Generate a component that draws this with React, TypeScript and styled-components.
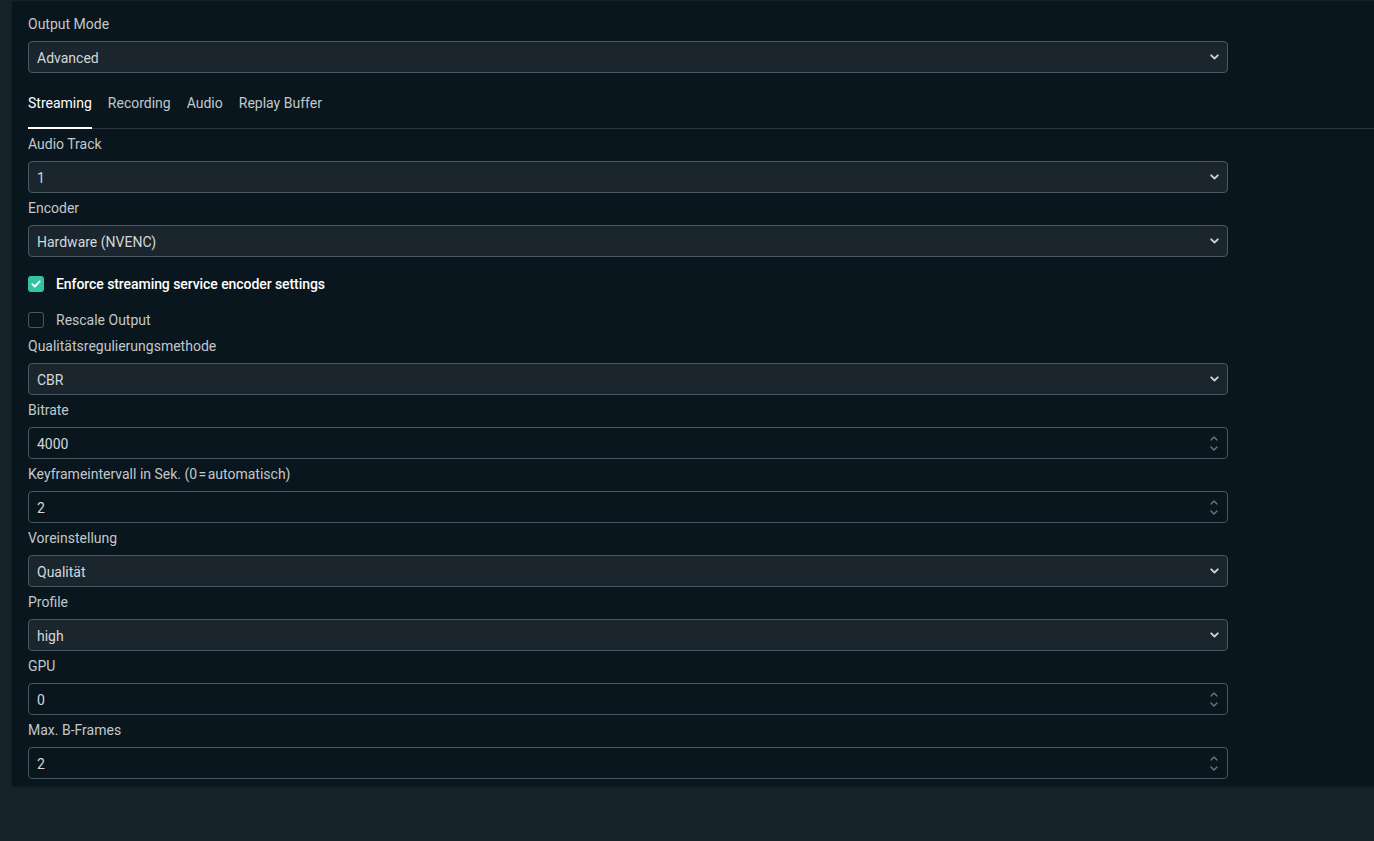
import React from "react";
import styled, { createGlobalStyle } from "styled-components";

const GlobalStyle = createGlobalStyle`
  html, body { margin: 0; padding: 0; background: #17232b; }
  body { font-family: Roboto, "Noto Sans", "Liberation Sans", sans-serif; font-size: 14px; }
  * { box-sizing: border-box; }
`;

const Page = styled.div`
  min-height: 841px;
  padding: 1px 0 0 12px;
  background: #17232b;
`;

const Panel = styled.div`
  background: #09161d;
  padding: 8px 0 7px 16px;
  box-shadow: 0 1px 3px rgba(0, 0, 0, 0.35);
`;

const Field = styled.div`
  width: 1200px;
`;

const Label = styled.div`
  height: 32px;
  line-height: 31px;
  color: #c2c8cc;
  font-size: 14px;
`;

const Box = styled.div<{ $raised?: boolean }>`
  height: 32px;
  display: flex;
  align-items: center;
  border: 1px solid #4a5761;
  border-radius: 4px;
  background: ${(p) => (p.$raised ? "#1a252d" : "#09161d")};
  padding: 0 8px 0 8px;
`;

const Value = styled.span`
  flex: 1;
  color: #d4d8db;
  font-size: 14px;
  padding-top: 1px;
`;

const Chevron = styled.svg`
  width: 9px;
  height: 6px;
`;

const Spinner = styled.div`
  display: flex;
  flex-direction: column;
  gap: 5px;
  margin-right: 1px;
`;

const SpinArrow = styled.svg`
  width: 8px;
  height: 5px;
  display: block;
`;

const TabBar = styled.div`
  display: flex;
  gap: 16px;
  margin-top: 8px;
  border-bottom: 1px solid #2b363e;
`;

const Tab = styled.div<{ $active?: boolean }>`
  position: relative;
  padding: 12px 0 15px;
  line-height: 20px;
  font-size: 14px;
  color: ${(p) => (p.$active ? "#ffffff" : "#c2c8cc")};
  &::after {
    content: "";
    display: ${(p) => (p.$active ? "block" : "none")};
    position: absolute;
    left: 0;
    right: 0;
    bottom: -1px;
    height: 2px;
    background: #ffffff;
  }
`;

const CheckGroup = styled.div`
  display: flex;
  flex-direction: column;
  gap: 12px;
  padding-top: 15px;
  margin-bottom: -1px;
`;

const CheckRow = styled.div`
  height: 24px;
  display: flex;
  align-items: center;
  gap: 12px;
`;

const CheckBox = styled.div<{ $checked?: boolean }>`
  width: 16px;
  height: 16px;
  border-radius: 3px;
  display: flex;
  align-items: center;
  justify-content: center;
  background: ${(p) => (p.$checked ? "#31c3a2" : "transparent")};
  border: ${(p) => (p.$checked ? "none" : "1px solid #4a5761")};
`;

const CheckText = styled.span<{ $strong?: boolean }>`
  color: ${(p) => (p.$strong ? "#ffffff" : "#c2c8cc")};
  font-weight: ${(p) => (p.$strong ? 500 : 400)};
  letter-spacing: ${(p) => (p.$strong ? "-0.07px" : "0")};
  font-size: 14px;
`;

const Down = () => (
  <Chevron viewBox="0 0 9 6">
    <path d="M1.2 1.3 L4.5 4.5 L7.8 1.3" fill="none" stroke="#cdd2d6" strokeWidth="1.8" strokeLinecap="round" strokeLinejoin="round" />
  </Chevron>
);

const Spin = () => (
  <Spinner>
    <SpinArrow viewBox="0 0 8 5">
      <path d="M1 4 L4 1 L7 4" fill="none" stroke="#6f7b84" strokeWidth="1.3" strokeLinecap="round" strokeLinejoin="round" />
    </SpinArrow>
    <SpinArrow viewBox="0 0 8 5">
      <path d="M1 1 L4 4 L7 1" fill="none" stroke="#6f7b84" strokeWidth="1.3" strokeLinecap="round" strokeLinejoin="round" />
    </SpinArrow>
  </Spinner>
);

const SelectField = ({ label, value }: { label: string; value: string }) => (
  <Field>
    <Label>{label}</Label>
    <Box $raised>
      <Value>{value}</Value>
      <Down />
    </Box>
  </Field>
);

const NumberField = ({ label, value }: { label: string; value: string }) => (
  <Field>
    <Label>{label}</Label>
    <Box>
      <Value>{value}</Value>
      <Spin />
    </Box>
  </Field>
);

const CheckMark = () => (
  <svg width="10" height="8" viewBox="0 0 10 8">
    <path d="M1.3 4.2 L3.8 6.5 L8.7 1.5" fill="none" stroke="#ffffff" strokeWidth="1.8" strokeLinecap="round" strokeLinejoin="round" />
  </svg>
);

export default function App() {
  return (
    <>
      <GlobalStyle />
      <Page>
        <Panel>
          <SelectField label="Output Mode" value="Advanced" />
          <TabBar>
            <Tab $active>Streaming</Tab>
            <Tab>Recording</Tab>
            <Tab>Audio</Tab>
            <Tab>Replay Buffer</Tab>
          </TabBar>
          <SelectField label="Audio Track" value="1" />
          <SelectField label="Encoder" value="Hardware (NVENC)" />
          <CheckGroup>
            <CheckRow>
              <CheckBox $checked>
                <CheckMark />
              </CheckBox>
              <CheckText $strong>Enforce streaming service encoder settings</CheckText>
            </CheckRow>
            <CheckRow>
              <CheckBox />
              <CheckText>Rescale Output</CheckText>
            </CheckRow>
          </CheckGroup>
          <SelectField label="Qualitätsregulierungsmethode" value="CBR" />
          <NumberField label="Bitrate" value="4000" />
          <NumberField label={"Keyframeintervall in Sek. (0\u200A=\u200Aautomatisch)"} value="2" />
          <SelectField label="Voreinstellung" value="Qualität" />
          <SelectField label="Profile" value="high" />
          <NumberField label="GPU" value="0" />
          <NumberField label="Max. B-Frames" value="2" />
        </Panel>
      </Page>
    </>
  );
}
